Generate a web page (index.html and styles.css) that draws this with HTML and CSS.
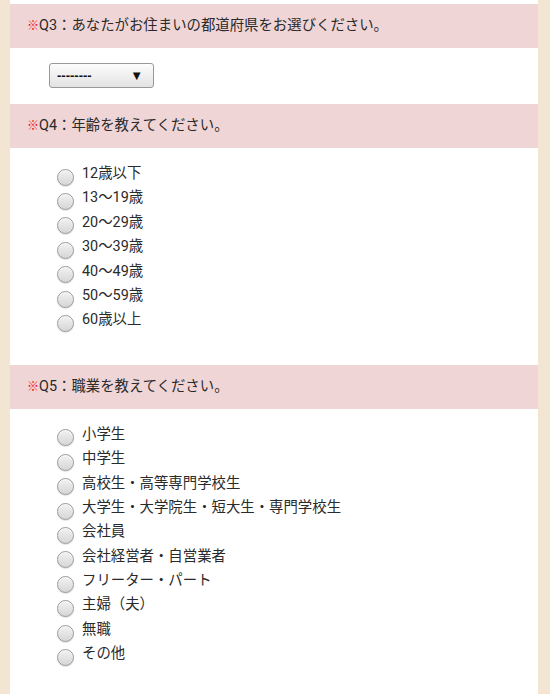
FILE: index.html
```html
<!DOCTYPE html>
<html lang="ja">

<head>
    <meta charset="UTF-8">
    <meta name="viewport" content="width=device-width, initial-scale=1.0">
    <title>アンケート</title>
    <link rel="stylesheet" href="styles.css">
</head>

<body>
    <div class="container">
        <div class="question">
            <div class="q-title"><span class="req">※</span>Q3：あなたがお住まいの都道府県をお選びください。</div>
            <div class="q-body select-body">
                <div class="select-box">
                    <span>--------</span>
                    <span class="arrow">▼</span>
                </div>
            </div>
        </div>

        <div class="question">
            <div class="q-title"><span class="req">※</span>Q4：年齢を教えてください。</div>
            <ul class="q-body choices age">
                <li><label><input type="radio" name="q4">12歳以下</label></li>
                <li><label><input type="radio" name="q4">13～19歳</label></li>
                <li><label><input type="radio" name="q4">20～29歳</label></li>
                <li><label><input type="radio" name="q4">30～39歳</label></li>
                <li><label><input type="radio" name="q4">40～49歳</label></li>
                <li><label><input type="radio" name="q4">50～59歳</label></li>
                <li><label><input type="radio" name="q4">60歳以上</label></li>
            </ul>
        </div>

        <div class="question">
            <div class="q-title"><span class="req">※</span>Q5：職業を教えてください。</div>
            <ul class="q-body choices">
                <li><label><input type="radio" name="q5">小学生</label></li>
                <li><label><input type="radio" name="q5">中学生</label></li>
                <li><label><input type="radio" name="q5">高校生・高等専門学校生</label></li>
                <li><label><input type="radio" name="q5">大学生・大学院生・短大生・専門学校生</label></li>
                <li><label><input type="radio" name="q5">会社員</label></li>
                <li><label><input type="radio" name="q5">会社経営者・自営業者</label></li>
                <li><label><input type="radio" name="q5">フリーター・パート</label></li>
                <li><label><input type="radio" name="q5">主婦（夫）</label></li>
                <li><label><input type="radio" name="q5">無職</label></li>
                <li><label><input type="radio" name="q5">その他</label></li>
            </ul>
        </div>
    </div>
</body>

</html>
```

FILE: styles.css
```css
/* ページ全体 */
body {
    margin: 0;
    background: #f2e6d2;
    font-family: Roboto, "Noto Sans CJK JP", sans-serif;
    color: #2a2a2a;
    font-size: 14.4px;
}

.container {
    margin: 0 12px 0 10px;
    padding-top: 4px;
    background: #fff;
    min-height: 700px;
}

/* 設問タイトル */
.q-title {
    background: #f0d5d6;
    height: 44px;
    line-height: 44px;
    padding-left: 17px;
    font-size: 14.4px;
}

.req {
    color: #f0101e;
    font-size: 12px;
    font-weight: bold;
}

.q-body {
    margin: 0;
}

/* セレクトボックス */
.select-body {
    padding: 15px 0 16px 39px;
}

.select-box {
    width: 86px;
    height: 23px;
    border: 1px solid #999;
    border-radius: 3px;
    background: linear-gradient(#fdfdfd, #e2e2e2);
    display: flex;
    justify-content: space-between;
    align-items: center;
    padding: 0 10px 0 7px;
    box-sizing: content-box;
    font-family: "Liberation Sans", Arial, sans-serif;
    font-size: 13px;
    font-weight: bold;
    color: #111;
}

.arrow {
    font-size: 13px;
}

/* ラジオボタン */
.choices {
    list-style: none;
    padding: 14px 0 32px 47px;
}

.choices li {
    line-height: 24.4px;
    height: 24.4px;
}

.choices label {
    display: flex;
    align-items: center;
}

.choices input {
    appearance: none;
    -webkit-appearance: none;
    width: 17px;
    height: 17px;
    margin: 6px 8px 0 0;
    border: 1px solid #999;
    border-radius: 50%;
    background: linear-gradient(#f2f2f2, #d6d6d6);
    box-shadow: inset 0 1px 1px rgba(255, 255, 255, 0.8), 0 1px 1px rgba(0, 0, 0, 0.12);
    box-sizing: border-box;
}
```
